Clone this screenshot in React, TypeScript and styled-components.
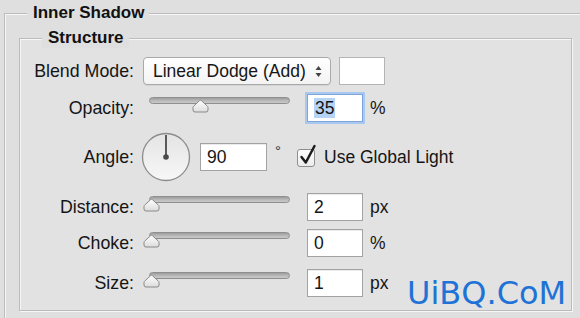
import React from "react";
import styled, { createGlobalStyle } from "styled-components";

const GlobalStyle = createGlobalStyle`
  html, body { margin: 0; padding: 0; background: #dfdfdf; }
  body {
    font-family: "Liberation Sans", Arial, sans-serif;
    color: #151515;
    width: 580px;
    height: 318px;
    overflow: hidden;
  }
`;

const Page = styled.div`
  position: relative;
  width: 580px;
  height: 318px;
  overflow: hidden;
  box-sizing: border-box;
  padding: 3px 0 0 4px;
`;

const Group = styled.fieldset<{ $outer?: boolean }>`
  margin: 0;
  min-width: 0;
  box-sizing: border-box;
  border: 1px solid #bcbcbc;
  box-shadow: inset 1px 1px 0 #f6f6f6, 1px 1px 0 #f6f6f6;
  background: ${(p) => (p.$outer ? "#dfdfdf" : "#e2e2e2")};
  width: ${(p) => (p.$outer ? "640px" : "553px")};
  padding: ${(p) => (p.$outer ? "5px 0 60px 14px" : "0 0 13px 0")};
`;

const Legend = styled.legend<{ $indent: number; $bg: string }>`
  font-weight: bold;
  font-size: 17px;
  line-height: 20px;
  padding: 0 5px 0 6px;
  margin-left: ${(p) => p.$indent}px;
  background: ${(p) => p.$bg};
  color: #111;
`;

const Row = styled.div<{ $top: number; $h: number }>`
  display: grid;
  grid-template-columns: 114px auto;
  column-gap: 9px;
  align-items: center;
  margin-top: ${(p) => p.$top}px;
  height: ${(p) => p.$h}px;
`;

const Label = styled.span`
  text-align: right;
  font-size: 17.8px;
  line-height: 20px;
  white-space: nowrap;
`;

const Controls = styled.div`
  display: flex;
  align-items: center;
  height: 100%;
`;

const Select = styled.div`
  box-sizing: border-box;
  width: 188px;
  height: 28px;
  border: 1px solid #a9a9a9;
  border-radius: 4px;
  background: linear-gradient(#ffffff, #f3f3f3);
  box-shadow: 0 1px 0 rgba(0, 0, 0, 0.06);
  display: flex;
  align-items: center;
  justify-content: space-between;
  padding: 0 8px 0 9px;
  font-size: 17.5px;
  white-space: nowrap;
`;

const Swatch = styled.div`
  box-sizing: border-box;
  width: 46px;
  height: 28px;
  margin-left: 8px;
  background: #ffffff;
  border: 1px solid #b5b5b5;
`;

const SliderBox = styled.div`
  position: relative;
  align-self: flex-start;
  width: 141px;
  height: 28px;
  margin-left: 6px;
`;

const Track = styled.div`
  margin-top: 3px;
  height: 7px;
  border-radius: 4px;
  border: 1px solid #8f8f8f;
  box-sizing: border-box;
  background: linear-gradient(#9d9d9d, #bdbdbd 60%, #c9c9c9);
`;

const Thumb = styled.svg`
  position: absolute;
  top: 5px;
`;

const NumberBox = styled.div<{ $w: number; $focus?: boolean; $gap: number }>`
  box-sizing: border-box;
  width: ${(p) => p.$w}px;
  height: 28px;
  margin-left: ${(p) => p.$gap}px;
  background: #ffffff;
  border: 1px solid ${(p) => (p.$focus ? "#7ea6da" : "#a3a3a3")};
  box-shadow: ${(p) =>
    p.$focus
      ? "0 0 0 2px #a9c8f0"
      : "inset 0 1px 0 rgba(0,0,0,0.08)"};
  display: flex;
  align-items: center;
  padding-left: 6px;
  font-size: 17.5px;
`;

const Selected = styled.span`
  background: #b5d3f5;
  padding: 0 1px;
  line-height: 20px;
`;

const Unit = styled.span<{ $gap: number }>`
  margin-left: ${(p) => p.$gap}px;
  font-size: 17.5px;
`;

const Degree = styled.span`
  margin-left: 8px;
  align-self: flex-start;
  margin-top: 10px;
  font-size: 15px;
  color: #333;
`;

const Dial = styled.svg`
  margin-left: -2px;
`;

const Check = styled.div`
  position: relative;
  box-sizing: border-box;
  width: 18px;
  height: 18px;
  margin-left: 16px;
  margin-top: 2px;
  border: 1px solid #8e8e8e;
  border-radius: 3px;
  background: linear-gradient(#ffffff, #ececec);
`;

const CheckMark = styled.svg`
  position: absolute;
  left: 1px;
  top: -6px;
`;

const CheckLabel = styled.span`
  margin-left: 9px;
  font-size: 17.5px;
  white-space: nowrap;
`;

const Watermark = styled.div`
  position: absolute;
  left: 407px;
  top: 275px;
  font-family: "DejaVu Sans", Verdana, sans-serif;
  font-size: 32px;
  line-height: 36px;
  color: #1f72d6;
`;

const ThumbIcon = ({ left }: { left: number }) => (
  <Thumb width="17" height="14" viewBox="0 0 17 14" style={{ left }}>
    <defs>
      <linearGradient id="tg" x1="0" y1="0" x2="0" y2="1">
        <stop offset="0" stopColor="#ffffff" />
        <stop offset="1" stopColor="#dcdcdc" />
      </linearGradient>
    </defs>
    <path
      d="M3 13 H14 Q16 13 16 11 V8.6 Q16 7.6 15 6.8 L9.6 1.8 Q8.5 0.9 7.4 1.8 L2 6.8 Q1 7.6 1 8.6 V11 Q1 13 3 13 Z"
      fill="url(#tg)"
      stroke="#8a8a8a"
      strokeWidth="1"
    />
  </Thumb>
);

const Slider = ({ pct }: { pct: number }) => (
  <SliderBox>
    <Track />
    <ThumbIcon left={-6 + (pct / 100) * 140} />
  </SliderBox>
);

const SliderRow = ({
  label,
  top,
  pct,
  value,
  unit,
  focus,
}: {
  label: string;
  top: number;
  pct: number;
  value: string;
  unit: string;
  focus?: boolean;
}) => (
  <Row $top={top} $h={28}>
    <Label>{label}</Label>
    <Controls>
      <Slider pct={pct} />
      <NumberBox $w={56} $gap={17} $focus={focus}>
        {focus ? <Selected>{value}</Selected> : value}
      </NumberBox>
      <Unit $gap={7}>{unit}</Unit>
    </Controls>
  </Row>
);

export default function App() {
  return (
    <>
      <GlobalStyle />
      <Page>
        <Group $outer>
          <Legend $indent={8} $bg="#dfdfdf">Inner Shadow</Legend>
          <Group>
            <Legend $indent={22} $bg="#dfdfdf">Structure</Legend>
            <Row $top={9} $h={28}>
              <Label>Blend Mode:</Label>
              <Controls>
                <Select>
                  <span>Linear Dodge (Add)</span>
                  <svg width="7" height="13" viewBox="0 0 7 13">
                    <path d="M0.5 5 L3.5 1 L6.5 5 Z" fill="#444" />
                    <path d="M0.5 8 L3.5 12 L6.5 8 Z" fill="#444" />
                  </svg>
                </Select>
                <Swatch />
              </Controls>
            </Row>
            <SliderRow label="Opacity:" top={9} pct={35} value="35" unit="%" focus />
            <Row $top={10} $h={50}>
              <Label>Angle:</Label>
              <Controls>
                <Dial width="50" height="50" viewBox="0 0 50 50">
                  <defs>
                    <linearGradient id="dg" x1="0" y1="0" x2="0" y2="1">
                      <stop offset="0" stopColor="#e4e4e4" />
                      <stop offset="1" stopColor="#f7f7f7" />
                    </linearGradient>
                  </defs>
                  <circle cx="25" cy="25" r="23.5" fill="url(#dg)" stroke="#8c8c8c" strokeWidth="1.3" />
                  <line x1="25" y1="25" x2="25" y2="3" stroke="#4a4a4a" strokeWidth="1.8" />
                  <circle cx="25" cy="25" r="2.8" fill="#4a4a4a" />
                </Dial>
                <NumberBox $w={67} $gap={9}>90</NumberBox>
                <Degree>°</Degree>
                <Check>
                  <CheckMark width="18" height="22" viewBox="0 0 18 22">
                    <path
                      d="M2.5 13 L6.8 18.5 L15.5 2"
                      fill="none"
                      stroke="#1e1e1e"
                      strokeWidth="2.5"
                      strokeLinecap="round"
                      strokeLinejoin="round"
                    />
                  </CheckMark>
                </Check>
                <CheckLabel>Use Global Light</CheckLabel>
              </Controls>
            </Row>
            <SliderRow label="Distance:" top={11} pct={0} value="2" unit="px" />
            <SliderRow label="Choke:" top={8} pct={0} value="0" unit="%" />
            <SliderRow label="Size:" top={12} pct={0} value="1" unit="px" />
          </Group>
        </Group>
        <Watermark>UiBQ.CoM</Watermark>
      </Page>
    </>
  );
}
